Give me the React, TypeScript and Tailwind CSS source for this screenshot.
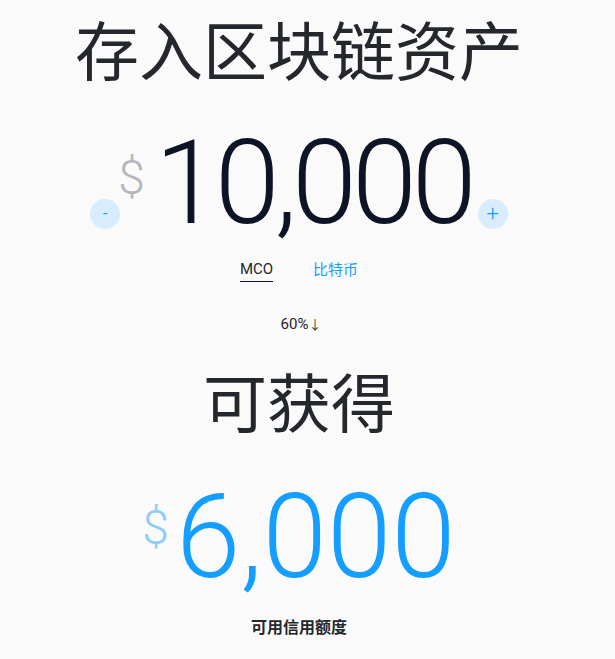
import React from 'react';

const cjk = '"Noto Sans CJK SC", "Noto Sans", sans-serif';
const num = 'Roboto, "Noto Sans CJK SC", sans-serif';

export default function App() {
  return (
    <div
      className="min-h-[659px] w-full bg-[#fafafa] pr-[17px] flex flex-col items-center text-[#24272b]"
      style={{ fontFamily: cjk }}
    >
      <h1 className="mt-[7px] text-[64px] leading-[80px] font-normal">存入区块链资产</h1>

      {/* amount */}
      <div className="mt-[38px] flex items-start" style={{ fontFamily: num }}>
        <button className="mt-[74px] w-[30px] h-[30px] rounded-full bg-[#d7ecfd] text-[#1a9cff] text-[16px] leading-none flex items-center justify-center">
          -
        </button>
        <span className="mt-[29px] -ml-[2px] text-[48px] leading-none text-[#b3b6ba] font-light">$</span>
        <span className="ml-[10px] text-[117px] leading-[117px] font-light tracking-[-5px] text-[#0c1426]">
          10,000
        </span>
        <button className="mt-[74px] ml-[6px] w-[30px] h-[30px] rounded-full bg-[#d7ecfd] text-[#1a9cff] text-[22px] font-light leading-none flex items-center justify-center">
          +
        </button>
      </div>

      {/* tabs */}
      <div className="mt-[17px] flex gap-[40px] text-[15px]">
        <span className="border-b border-[#0c1426] pb-[2px] leading-[20px] text-[#24272b]" style={{ fontFamily: num }}>
          MCO
        </span>
        <span className="text-[#1a9cff] leading-[20px]">比特币</span>
      </div>

      <div className="mt-[31px] ml-[4px] text-[15px] text-[#24272b] flex items-baseline" style={{ fontFamily: num }}>
        60%<span className="text-[13px] text-[#2f3a33]">↓</span>
      </div>

      <h2 className="mt-[23px] text-[64px] leading-[80px] font-normal">可获得</h2>

      <div className="mt-[40px] flex items-start" style={{ fontFamily: num }}>
        <span className="mt-[25px] text-[48px] leading-none text-[#8ccbfa] font-light">$</span>
        <span className="ml-[7px] text-[116px] leading-[116px] font-light text-[#149eff]">6,000</span>
      </div>

      <div className="mt-[19px] text-[16px] font-semibold text-[#24272b]">可用信用额度</div>
    </div>
  );
}
